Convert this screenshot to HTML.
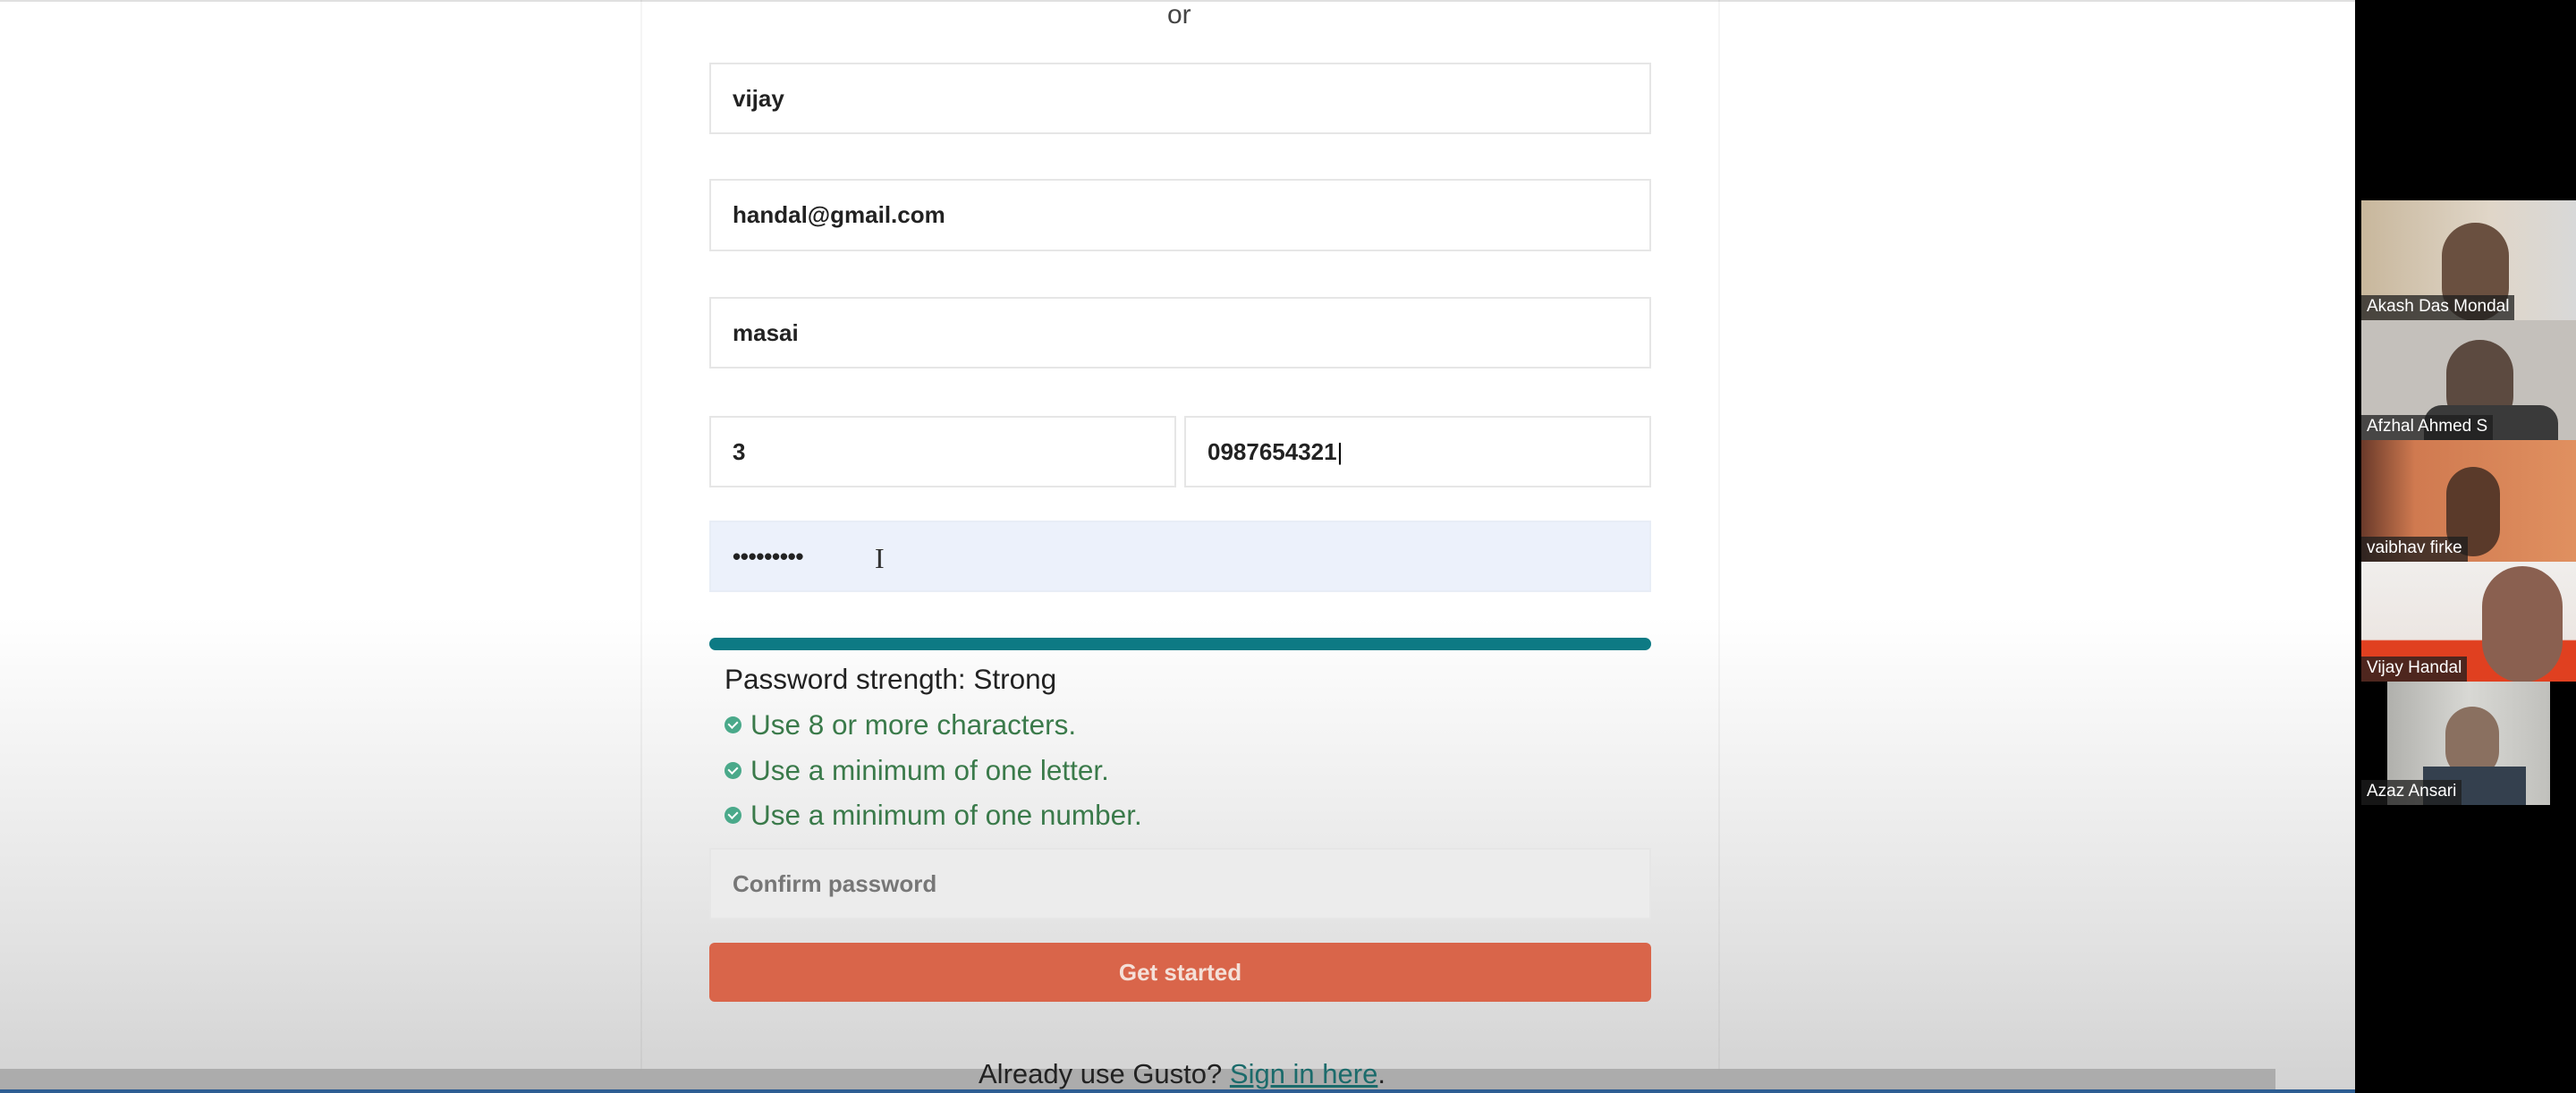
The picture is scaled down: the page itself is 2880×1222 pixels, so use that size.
<!DOCTYPE html>
<html><head><meta charset="utf-8"><style>
*{margin:0;padding:0;box-sizing:border-box}
body{width:2880px;height:1222px;overflow:hidden;position:relative;font-family:"Liberation Sans",sans-serif;background:linear-gradient(#fff 0,#fff 690px,#f2f2f2 850px,#e2e2e2 1050px,#d2d2d2 1222px)}
.abs{position:absolute}
.card{left:716px;top:0;width:1207px;height:1222px;border-left:2px solid rgba(0,0,0,0.04);border-right:2px solid rgba(0,0,0,0.04)}
.inp{position:absolute;background:#fff;border:2px solid #e6e6e6;font-weight:bold;font-size:26px;color:#222;padding-left:24px;display:flex;align-items:center}
.chk{position:absolute;left:810px;font-size:31.5px;color:#3a7a4a;display:flex;align-items:center}
.chk i{display:inline-block;width:19px;height:19px;border-radius:50%;background:#4aa98a;margin-right:10px;position:relative}
.chk i:after{content:"";position:absolute;left:6px;top:3px;width:5px;height:8px;border:solid #fff;border-width:0 2px 2px 0;transform:rotate(45deg)}
.tile{position:absolute;overflow:hidden}
.lbl{position:absolute;left:0;bottom:0;background:rgba(30,30,30,0.75);color:#fff;font-size:19px;padding:2px 6px;height:28px}
</style></head><body>
<div class="abs" style="left:0;top:0;width:2633px;height:2px;background:#e0e0e0"></div>
<div class="abs card"></div>
<div class="abs" style="left:1305px;top:0;font-size:30px;color:#444">or</div>
<div class="inp" style="left:793px;top:70px;width:1053px;height:80px">vijay</div>
<div class="inp" style="left:793px;top:200px;width:1053px;height:81px">handal@gmail.com</div>
<div class="inp" style="left:793px;top:332px;width:1053px;height:80px">masai</div>
<div class="inp" style="left:793px;top:465px;width:522px;height:80px">3</div>
<div class="inp" style="left:1324px;top:465px;width:522px;height:80px">0987654321<span style="font-weight:normal;color:#000">|</span></div>
<div class="inp" style="left:793px;top:582px;width:1053px;height:80px;background:#ecf1fb;border-color:#e8edf6;letter-spacing:-0.3px">•••••••••</div>
<div class="abs" style="left:978px;top:606px;font-size:32px;color:#333;font-family:'Liberation Serif',serif">I</div>
<div class="abs" style="left:793px;top:713px;width:1053px;height:14px;border-radius:7px;background:#0d7a84"></div>
<div class="abs" style="left:810px;top:741px;font-size:31.5px;color:#222">Password strength: Strong</div>
<div class="chk" style="top:792px"><i></i>Use 8 or more characters.</div>
<div class="chk" style="top:843px"><i></i>Use a minimum of one letter.</div>
<div class="chk" style="top:893px"><i></i>Use a minimum of one number.</div>
<div class="inp" style="left:793px;top:948px;width:1053px;height:80px;background:#ececec;color:#777">Confirm password</div>
<div class="abs" style="left:793px;top:1054px;width:1053px;height:66px;background:#d9654a;border-radius:6px;color:#f4e0d8;font-weight:bold;font-size:26px;display:flex;align-items:center;justify-content:center">Get started</div>
<div class="abs" style="left:0;top:1195px;width:2544px;height:23px;background:#acacac"></div>
<div class="abs" style="left:0;top:1218px;width:2633px;height:4px;background:#2d5d92"></div>
<div class="abs" style="left:1094px;top:1183px;font-size:31px;color:#222">Already use Gusto? <span style="color:#1b6b6b;text-decoration:underline">Sign in here</span>.</div>
<div class="abs" style="left:2633px;top:0;width:247px;height:1222px;background:#000"></div>
<div class="tile" style="left:2640px;top:224px;width:240px;height:134px;background:linear-gradient(90deg,#c8b79c,#e0d6c8 60%,#d8d8d8)"><div class="abs" style="left:90px;top:25px;width:75px;height:110px;border-radius:37px;background:#6a5040"></div><div class="lbl">Akash Das Mondal</div></div>
<div class="tile" style="left:2640px;top:358px;width:240px;height:134px;background:#c4c0bb"><div class="abs" style="left:95px;top:22px;width:75px;height:100px;border-radius:37px;background:#5c4a40"></div><div class="abs" style="left:70px;top:95px;width:150px;height:45px;border-radius:20px 20px 0 0;background:#3a3a3a"></div><div class="lbl">Afzhal Ahmed S</div></div>
<div class="tile" style="left:2640px;top:492px;width:240px;height:136px;background:linear-gradient(90deg,#6a3a2a 0,#d07a50 25%,#e09060)"><div class="abs" style="left:95px;top:30px;width:60px;height:100px;border-radius:30px;background:#5a3a2a"></div><div class="lbl">vaibhav firke</div></div>
<div class="tile" style="left:2640px;top:628px;width:240px;height:134px;background:linear-gradient(#f0eeec 0,#ece6e2 65%,#e04020 66%)"><div class="abs" style="left:135px;top:5px;width:90px;height:130px;border-radius:45px;background:#8a6050"></div><div class="lbl">Vijay Handal</div></div>
<div class="tile" style="left:2669px;top:762px;width:182px;height:138px;background:linear-gradient(90deg,#b0b0ac,#d8d8d4 50%,#c0c0bc)"><div class="abs" style="left:65px;top:28px;width:60px;height:80px;border-radius:30px;background:#8a7060"></div><div class="abs" style="left:40px;top:95px;width:115px;height:45px;background:#34404e"></div></div>
<div class="lbl" style="left:2640px;top:872px;bottom:auto">Azaz Ansari</div>
</body></html>
